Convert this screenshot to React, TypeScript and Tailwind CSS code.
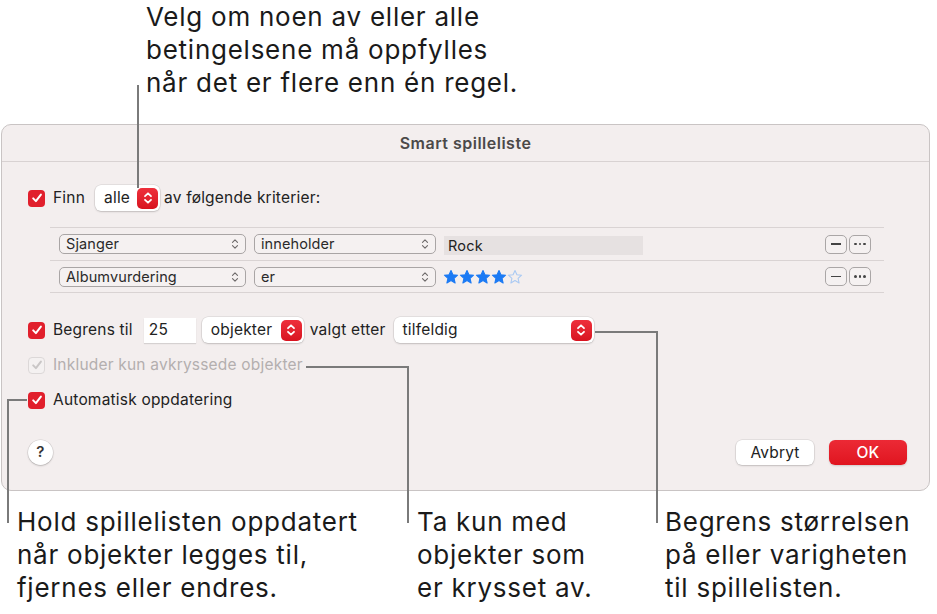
import React from "react";

const FONT = "font-['Inter','Noto_Sans',sans-serif]";

function Check({ disabled = false }: { disabled?: boolean }) {
  return (
    <span
      className={
        "flex h-[17px] w-[17px] shrink-0 items-center justify-center rounded-[4px] " +
        (disabled ? "border border-[#dcd8d8] bg-[#f4f1f1]" : "bg-[#e11f2c]")
      }
    >
      <svg width="12" height="12" viewBox="0 0 12 12">
        <path
          d="M2.2 6.4 L4.9 9.1 L9.9 2.6"
          fill="none"
          stroke={disabled ? "#c9c6c6" : "#fff"}
          strokeWidth="2"
          strokeLinecap="round"
          strokeLinejoin="round"
        />
      </svg>
    </span>
  );
}

function RedStepper() {
  return (
    <span className="flex h-[21px] w-[21px] items-center justify-center rounded-[5px] bg-gradient-to-b from-[#ee2f3b] to-[#d8121f]">
      <svg width="10" height="14" viewBox="0 0 10 14">
        <path
          d="M2 5.2 L5 2.3 L8 5.2 M2 8.8 L5 11.7 L8 8.8"
          fill="none"
          stroke="#fff"
          strokeWidth="1.8"
          strokeLinecap="round"
          strokeLinejoin="round"
        />
      </svg>
    </span>
  );
}

function GrayChevrons() {
  return (
    <svg width="8" height="12" viewBox="0 0 8 12">
      <path
        d="M1.5 4.3 L4 1.8 L6.5 4.3 M1.5 7.7 L4 10.2 L6.5 7.7"
        fill="none"
        stroke="#6d6a6a"
        strokeWidth="1.1"
        strokeLinecap="round"
        strokeLinejoin="round"
      />
    </svg>
  );
}

function Popup({ label, width }: { label: string; width: string }) {
  return (
    <div
      className={
        "flex h-[26px] items-center justify-between rounded-[6px] bg-white pl-[9px] pr-[2px] shadow-[0_0_0_0.5px_rgba(0,0,0,0.12),0_1px_2px_rgba(0,0,0,0.15)] " +
        width
      }
    >
      <span>{label}</span>
      <RedStepper />
    </div>
  );
}

function RulePopup({ label, width }: { label: string; width: string }) {
  return (
    <div
      className={
        "flex h-[20px] items-center justify-between rounded-[5px] border border-[#a9a5a5] bg-[#f5f1f1] pl-[6px] pr-[6px] text-[14.5px] tracking-[0.1px] text-[#2a2a2a] " +
        width
      }
    >
      <span>{label}</span>
      <GrayChevrons />
    </div>
  );
}

function SmallButtons() {
  return (
    <div className="ml-auto mr-[13px] flex gap-[2px]">
      <span className="flex h-[19px] w-[22px] items-center justify-center rounded-[5px] border border-[#aaa6a6] bg-[#f5f1f1]">
        <span className="h-[1.5px] w-[10px] bg-[#444]" />
      </span>
      <span className="flex h-[19px] w-[22px] items-center justify-center gap-[2px] rounded-[5px] border border-[#aaa6a6] bg-[#f5f1f1]">
        <span className="h-[2.5px] w-[2.5px] rounded-full bg-[#444]" />
        <span className="h-[2.5px] w-[2.5px] rounded-full bg-[#444]" />
        <span className="h-[2.5px] w-[2.5px] rounded-full bg-[#444]" />
      </span>
    </div>
  );
}

function Star({ filled }: { filled: boolean }) {
  return (
    <svg width="16" height="16" viewBox="0 0 24 24">
      <path
        d="M12 2.2 L14.9 8.7 L21.9 9.3 L16.6 14 L18.2 21 L12 17.3 L5.8 21 L7.4 14 L2.1 9.3 L9.1 8.7 Z"
        fill={filled ? "#1b7af4" : "none"}
        stroke={filled ? "#1b7af4" : "#a9c9f3"}
        strokeWidth="1.6"
        strokeLinejoin="round"
      />
    </svg>
  );
}

export default function App() {
  return (
    <div className={"relative h-[614px] w-[937px] overflow-hidden bg-white text-[#1d1d1d] " + FONT}>
      {/* top callout */}
      <div className="pl-[146px] text-[26px] leading-[33px] tracking-[0.75px] text-[#1a1a1a]">
        <div>Velg om noen av eller alle</div>
        <div>betingelsene må oppfylles</div>
        <div>når det er flere enn én regel.</div>
      </div>

      {/* dialog */}
      <div className="ml-[1px] mt-[25px] w-[929px] rounded-[10px] border border-[#c9c4c4] bg-[#f3eeee] text-[15.5px] tracking-[0.2px] text-[#222]">
        <div className="flex h-[37px] items-center justify-center border-b border-[#d8d2d2] text-[16px] font-semibold tracking-[0.5px] text-[#4b4949]">
          Smart spilleliste
        </div>

        <div className="px-[26px] pb-[25px] pt-[23px]">
          <div className="flex h-[26px] items-center">
            <Check />
            <span className="ml-[8px]">Finn</span>
            <div className="ml-[10px]">
              <Popup label="alle" width="w-[65px]" />
            </div>
            <span className="ml-[4px]">av følgende kriterier:</span>
          </div>

          <div className="ml-[22px] mr-[19px] mt-[16px] border-t border-[#d9d3d3]">
            <div className="flex h-[33px] items-center border-b border-[#d9d3d3] pl-[9px]">
              <RulePopup label="Sjanger" width="w-[187px]" />
              <div className="ml-[8px]">
                <RulePopup label="inneholder" width="w-[182px]" />
              </div>
              <div className="ml-[8px] mt-[3px] flex h-[19px] w-[199px] items-center bg-[#e6e1e1] pl-[4px] text-[14.5px] text-[#222]">
                Rock
              </div>
              <SmallButtons />
            </div>
            <div className="flex h-[32px] items-center border-b border-[#d9d3d3] pl-[9px]">
              <RulePopup label="Albumvurdering" width="w-[187px]" />
              <div className="ml-[8px]">
                <RulePopup label="er" width="w-[182px]" />
              </div>
              <div className="ml-[7px] flex">
                <Star filled />
                <Star filled />
                <Star filled />
                <Star filled />
                <Star filled={false} />
              </div>
              <SmallButtons />
            </div>
          </div>

          <div className="mt-[24px] flex h-[26px] items-center">
            <Check />
            <span className="ml-[8px]">Begrens til</span>
            <div className="ml-[11px] flex h-[25px] w-[52px] items-center bg-white pl-[5px] shadow-[0_1px_1px_rgba(0,0,0,0.12)]">
              25
            </div>
            <div className="ml-[6px]">
              <Popup label="objekter" width="w-[102px]" />
            </div>
            <span className="ml-[6px]">valgt etter</span>
            <div className="ml-[8px]">
              <Popup label="tilfeldig" width="w-[200px]" />
            </div>
          </div>

          <div className="mt-[11px] flex h-[22px] items-center text-[#b3afaf]">
            <Check disabled />
            <span className="ml-[8px]">Inkluder kun avkryssede objekter</span>
          </div>

          <div className="mt-[13px] flex h-[22px] items-center">
            <Check />
            <span className="ml-[8px]">Automatisk oppdatering</span>
          </div>

          <div className="mt-[29px] flex h-[25px] items-center">
            <span className="flex h-[25px] w-[25px] items-center justify-center rounded-full bg-white text-[15px] font-semibold text-[#333] shadow-[0_0_0_0.5px_rgba(0,0,0,0.12),0_1px_2px_rgba(0,0,0,0.18)]">
              ?
            </span>
            <div className="ml-auto mr-[-4px] flex gap-[15px]">
              <span className="flex h-[25px] w-[78px] items-center justify-center rounded-[6px] bg-white text-[#222] shadow-[0_0_0_0.5px_rgba(0,0,0,0.12),0_1px_2px_rgba(0,0,0,0.15)]">
                Avbryt
              </span>
              <span className="flex h-[25px] w-[78px] items-center justify-center rounded-[6px] bg-gradient-to-b from-[#ec2935] to-[#e0141f] font-medium text-white shadow-[0_1px_2px_rgba(0,0,0,0.15)]">
                OK
              </span>
            </div>
          </div>
        </div>
      </div>

      {/* bottom callouts */}
      <div className="mt-[14px] flex text-[26px] leading-[33px] tracking-[0.75px] text-[#1a1a1a]">
        <div className="ml-[17px] w-[400px]">
          <div>Hold spillelisten oppdatert</div>
          <div>når objekter legges til,</div>
          <div>fjernes eller endres.</div>
        </div>
        <div className="w-[248px]">
          <div>Ta kun med</div>
          <div>objekter som</div>
          <div>er krysset av.</div>
        </div>
        <div className="whitespace-nowrap">
          <div>Begrens størrelsen</div>
          <div>på eller varigheten</div>
          <div>til spillelisten.</div>
        </div>
      </div>

      {/* leader lines */}
      <div className="absolute left-[137px] top-[85px] h-[103px] w-[2px] bg-[#7a7a7a]" />

      <div className="absolute left-[7px] top-[399px] h-[2px] w-[20px] bg-[#7a7a7a]" />
      <div className="absolute left-[7px] top-[399px] h-[124px] w-[2px] bg-[#7a7a7a]" />

      <div className="absolute left-[306px] top-[366px] h-[2px] w-[103px] bg-[#7a7a7a]" />
      <div className="absolute left-[407px] top-[366px] h-[157px] w-[2px] bg-[#7a7a7a]" />

      <div className="absolute left-[595px] top-[331px] h-[2px] w-[63px] bg-[#7a7a7a]" />
      <div className="absolute left-[656px] top-[331px] h-[192px] w-[2px] bg-[#7a7a7a]" />
    </div>
  );
}
